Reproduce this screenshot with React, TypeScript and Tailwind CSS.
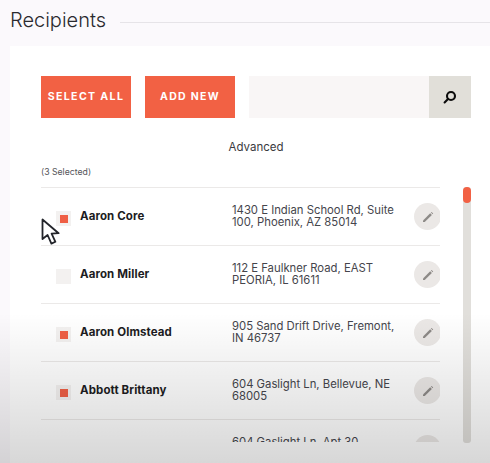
import React from 'react';

interface Recipient {
  name: string;
  address: string[];
  selected: boolean;
}

const recipients: Recipient[] = [
  { name: 'Aaron Core', address: ['1430 E Indian School Rd, Suite', '100, Phoenix, AZ 85014'], selected: true },
  { name: 'Aaron Miller', address: ['112 E Faulkner Road, EAST', 'PEORIA, IL 61611'], selected: false },
  { name: 'Aaron Olmstead', address: ['905 Sand Drift Drive, Fremont,', 'IN 46737'], selected: true },
  { name: 'Abbott Brittany', address: ['604 Gaslight Ln, Bellevue, NE', '68005'], selected: true },
  { name: 'Abbott Brittany', address: ['604 Gaslight Ln, Apt 30,', 'Bellevue, NE 68005'], selected: false },
];

const SearchIcon = () => (
  <svg width="14" height="14" viewBox="0 0 14 14" fill="none" stroke="#0c0c0c" strokeWidth="2.1">
    <circle cx="8" cy="6" r="4" />
    <path d="M5 9 L1.6 12.4" strokeLinecap="round" />
  </svg>
);

const PencilIcon = () => (
  <svg width="12" height="12" viewBox="0 0 12 12" fill="#8d8a87">
    <path d="M1 9.4 L8.2 2.2 L9.9 3.9 L2.7 11.1 L1 11.1 Z" />
    <path d="M8.9 1.5 L9.6 0.9 L11.2 2.5 L10.6 3.2 Z" />
  </svg>
);

const Cursor = () => (
  <svg width="20" height="28" viewBox="0 0 20 28" fill="#ffffff" stroke="#22242a" strokeWidth="1.8" strokeLinejoin="round">
    <path d="M1.5 1.5 L1.5 21 L6.6 17 L10.4 25.6 L14.4 23.8 L10.6 15.6 L17.6 15.2 Z" />
  </svg>
);

const Row = ({ recipient }: { recipient: Recipient }) => (
  <div className="flex h-[58px] shrink-0 items-center border-b border-[#ebe9e8] pl-[15px]">
    <div className="mt-[4px] flex h-[15px] w-[15px] shrink-0 items-center justify-center bg-[#f3f1f0]">
      {recipient.selected && <div className="h-[8px] w-[8px] bg-[#ef5f45]" />}
    </div>
    <div className="ml-[9px] w-[152px] shrink-0 text-[11.5px] font-bold tracking-[0.1px] text-[#1c1c22]">
      {recipient.name}
    </div>
    <div className="w-[182px] shrink-0 text-[11.3px] leading-[11.5px] text-[#45454c]">
      {recipient.address.map((line) => (
        <div key={line}>{line}</div>
      ))}
    </div>
    <div className="flex h-[27px] w-[27px] shrink-0 items-center justify-center rounded-full bg-[#ebe8e6]">
      <PencilIcon />
    </div>
  </div>
);

export default function App() {
  return (
    <div className="relative h-[463px] w-[490px] overflow-hidden bg-[#fbf9fc] font-['Inter',sans-serif]">
      {/* Heading */}
      <div className="flex h-[46px] items-center pb-[7px] pl-[10px]">
        <h1 className="text-[20px] font-light leading-[30px] text-[#2a2a2e]">Recipients</h1>
        <div className="ml-[14px] mt-[5px] h-px flex-1 bg-[#e6e4e8]" />
      </div>

      {/* Card */}
      <div className="ml-[10px] h-[417px] bg-white pl-[31px] pr-[19px] pt-[30px]">
        <div className="flex h-[42px] gap-[14px]">
          <button className="w-[90px] bg-[#f26144] text-[10.6px] font-bold tracking-[1.35px] text-white">SELECT ALL</button>
          <button className="w-[90px] bg-[#f26144] text-[10.5px] font-bold tracking-[1.3px] text-white">ADD NEW</button>
          <div className="flex flex-1">
            <div className="flex-1 bg-[#f9f6f6]" />
            <div className="flex w-[42px] items-center justify-center bg-[#e1dfd9]">
              <SearchIcon />
            </div>
          </div>
        </div>

        <div className="mt-[21px] text-center text-[11.5px] leading-[16px] text-[#3a3a40]">Advanced</div>
        <div className="mt-[11px] text-[8.7px] leading-[12px] text-[#55555a]">(3 Selected)</div>

        <div className="mt-[9px] flex">
          <div className="h-[255px] w-[399px] overflow-hidden border-t border-[#ebe9e8]">
            {recipients.map((recipient, i) => (
              <Row key={i} recipient={recipient} />
            ))}
          </div>
          <div className="ml-[23px] h-[256px] w-[8px] rounded-[3px] bg-[#e1dfdb]">
            <div className="h-[16px] rounded-[4px] bg-[#f26144]" />
          </div>
        </div>
      </div>

      {/* Mouse pointer from the recording */}
      <div className="absolute left-[41px] top-[218px]">
        <Cursor />
      </div>

      {/* Dark fade at the bottom of the recording */}
      <div className="pointer-events-none absolute inset-x-0 bottom-0 h-[150px] bg-gradient-to-b from-transparent to-[#00000028]" />
    </div>
  );
}
